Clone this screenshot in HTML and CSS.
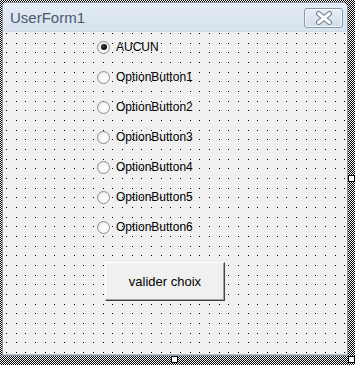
FILE: index.html
```html
<!DOCTYPE html>
<html>
<head>
<meta charset="utf-8">
<title>UserForm1</title>
<link rel="stylesheet" href="styles.css">
</head>
<body>

<div id="designer">
  <div class="form">
    <div class="titlebar">
      <span class="caption">UserForm1</span>
      <div class="closebtn">
        <svg width="18" height="14" viewBox="0 0 18 14">
          <path d="M3.5 2.5 L14.5 11.5 M14.5 2.5 L3.5 11.5" stroke="#6f7b8a" stroke-width="5" stroke-linecap="round"/>
          <path d="M3.5 2.5 L14.5 11.5 M14.5 2.5 L3.5 11.5" stroke="#ffffff" stroke-width="3" stroke-linecap="round"/>
        </svg>
      </div>
    </div>
    <div class="client">
      <ul class="optionlist">
        <li><span class="radio checked"></span>AUCUN</li>
        <li><span class="radio"></span>OptionButton1</li>
        <li><span class="radio"></span>OptionButton2</li>
        <li><span class="radio"></span>OptionButton3</li>
        <li><span class="radio"></span>OptionButton4</li>
        <li><span class="radio"></span>OptionButton5</li>
        <li><span class="radio"></span>OptionButton6</li>
      </ul>
      <div class="cmdbutton">valider choix</div>
    </div>
  </div>

  <div class="handle h-right"></div>
  <div class="handle h-bottom"></div>
  <div class="handle h-corner"></div>
</div>

</body>
</html>
```

FILE: styles.css
```css
html, body { margin: 0; padding: 0; }
body {
  width: 355px; height: 365px; overflow: hidden;
  background: repeating-conic-gradient(#000 0 25%, #fff 0 50%) 0 0 / 2px 2px;
  font-family: "Liberation Sans", Arial, sans-serif;
}

#designer { position: relative; width: 355px; height: 365px; padding: 2px 0 0 2px; box-sizing: border-box; }

div.form {
  width: 346px; height: 354px; box-sizing: border-box;
  border: 1px solid #8b98a8; border-radius: 5px 5px 0 0;
  background: #f0f0f0;
  display: flex; flex-direction: column;
}

div.titlebar {
  height: 28px; flex: none;
  display: flex; align-items: center; justify-content: space-between;
  padding: 0 4px 0 7px;
  border-radius: 4px 4px 0 0;
  background: linear-gradient(#e3ebf4, #d6e2ee);
  border-bottom: 1px solid #d0dbe7;
}
span.caption { font-size: 15px; color: #4b596b; padding-top: 1px; }

div.closebtn {
  width: 39px; height: 20px; box-sizing: border-box;
  border: 1px solid #8c9aab; border-radius: 3px;
  background: linear-gradient(#e8eef6, #d2deea);
  box-shadow: inset 0 0 0 1px #f2f6fa;
  display: flex; align-items: center; justify-content: center;
  margin-top: 1px;
}

div.client {
  flex: 1;
  border-bottom: 1px solid #b5bcc6;
  background-color: #f0f0f0;
  background-image:
    conic-gradient(at 1px 1px, transparent 75%, #000 0),
    conic-gradient(at 1px 1px, transparent 75%, #000 0),
    conic-gradient(at 1px 1px, transparent 75%, #000 0),
    conic-gradient(at 1px 1px, transparent 75%, #000 0),
    conic-gradient(at 1px 1px, transparent 75%, #000 0),
    conic-gradient(at 1px 1px, transparent 75%, #000 0),
    conic-gradient(at 1px 1px, transparent 75%, #000 0),
    conic-gradient(at 1px 1px, transparent 75%, #000 0),
    conic-gradient(at 1px 1px, transparent 75%, #000 0);
  background-size: 29px 29px;
  background-position:
    3px 1px, 13px 1px, 22px 1px,
    3px 11px, 13px 11px, 22px 11px,
    3px 20px, 13px 20px, 22px 20px;
}

ul.optionlist { list-style: none; margin: 0; padding: 0 0 0 94px; }
ul.optionlist li {
  height: 30px; display: flex; align-items: center;
  font-size: 12px; color: #000;
}
ul.optionlist li span { margin-right: 6px; }

span.radio {
  width: 13px; height: 13px; box-sizing: border-box; flex: none;
  border: 1px solid #8e8f8f; border-radius: 50%;
  background: radial-gradient(circle at 60% 60%, #ffffff 0, #f7f7f7 45%, #dcdcdc 100%);
  display: flex; align-items: center; justify-content: center;
}
span.radio.checked::after {
  content: ""; width: 6px; height: 6px; border-radius: 50%;
  background: radial-gradient(circle at 40% 40%, #444 0, #000 70%);
}

div.cmdbutton {
  margin: 20px 0 0 102px;
  width: 120px; height: 39px; box-sizing: border-box;
  border: 1px solid; border-color: #ffffff #404040 #404040 #ffffff;
  box-shadow: inset -1px -1px 0 #a0a0a0;
  background: #f0f0f0;
  display: flex; align-items: center; justify-content: center;
  font-size: 13px; color: #000;
}

div.handle {
  position: absolute; width: 7px; height: 7px; box-sizing: border-box;
  background: #fff; border: 1px solid #000;
}
div.h-right { left: 348px; top: 175px; }
div.h-bottom { left: 171px; top: 356px; }
div.h-corner { left: 348px; top: 356px; }
```
